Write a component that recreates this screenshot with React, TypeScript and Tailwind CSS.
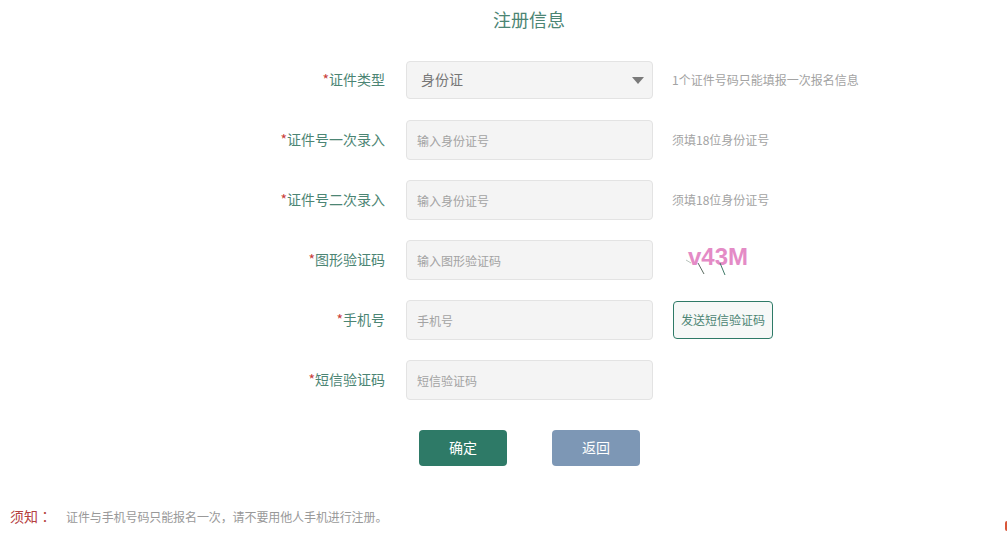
const FIELDS = [
  { label: '证件号一次录入', placeholder: '输入身份证号', hint: '须填18位身份证号' },
  { label: '证件号二次录入', placeholder: '输入身份证号', hint: '须填18位身份证号' },
];

function Row({ label, children, aside }: { label: string; children: React.ReactNode; aside?: React.ReactNode }) {
  return (
    <div className="flex h-[40px] items-center">
      <label className="w-[385px] pb-[2px] text-right text-[14px] text-[#4c8574]">
        <span className="text-[#c8403a]">*</span>
        {label}
      </label>
      <div className="ml-[21px] h-full w-[247px]">{children}</div>
      {aside && <div className="ml-[20px]">{aside}</div>}
    </div>
  );
}

function TextInput({ placeholder }: { placeholder: string }) {
  return (
    <input
      placeholder={placeholder}
      className="h-full w-full rounded-[4px] border border-[#e3e3e3] bg-[#f4f4f4] px-[10px] text-[12px] outline-none placeholder:text-[#a3a3a3]"
    />
  );
}

function Hint({ children }: { children: React.ReactNode }) {
  return <span className="-ml-[1px] block text-[12px] text-[#a3a3a3]">{children}</span>;
}

function Captcha() {
  return (
    <div className="relative -mt-[6px] h-[40px] w-[80px]">
      <span className="absolute left-[15px] top-[3px] text-[24px] leading-[34px] font-bold text-[#e48bc6] [font-family:'Liberation_Sans',sans-serif]">
        v43M
      </span>
      <svg className="absolute left-0 top-0" width="80" height="40" fill="none" strokeWidth="1">
        <path d="M13 23 L18 26" stroke="#b9c4bd" />
        <path d="M25 26 L31 37" stroke="#5a6b60" />
        <path d="M47 26 L52 38" stroke="#3f7a68" />
      </svg>
    </div>
  );
}

export default function App() {
  return (
    <div className="relative h-[539px] w-[1007px] overflow-hidden bg-white font-['Noto_Sans_CJK_SC',sans-serif]">
      <h1 className="ml-[493px] pt-[6px] text-[18px] leading-[26px] font-normal text-[#4c8574]">注册信息</h1>

      <div className="mt-[29px] flex flex-col gap-[20px]">
        <div className="flex h-[38px] items-center">
          <label className="w-[385px] pb-[2px] text-right text-[14px] text-[#4c8574]">
            <span className="text-[#c8403a]">*</span>证件类型
          </label>
          <div className="ml-[21px] flex h-full w-[247px] items-center justify-between rounded-[4px] border border-[#e3e3e3] bg-[#f4f4f4] pr-[8px] pl-[14px] text-[14px] text-[#777777]">
            <span className="pb-[2px]">身份证</span>
            <svg width="12" height="7" viewBox="0 0 12 7">
              <path d="M0 0H12L6 7Z" fill="#7a7a7a" />
            </svg>
          </div>
          <div className="ml-[20px]">
            <Hint>1个证件号码只能填报一次报名信息</Hint>
          </div>
        </div>

        <div className="mt-[1px] flex flex-col gap-[20px]">
          {FIELDS.map((f) => (
            <Row key={f.label} label={f.label} aside={<Hint>{f.hint}</Hint>}>
              <TextInput placeholder={f.placeholder} />
            </Row>
          ))}
          <Row label="图形验证码" aside={<Captcha />}>
            <TextInput placeholder="输入图形验证码" />
          </Row>
          <Row
            label="手机号"
            aside={
              <button className="h-[38px] w-[100px] rounded-[4px] border border-[#2e7a67] bg-[#f6f8f7] text-[12px] text-[#4c8574]">
                发送短信验证码
              </button>
            }
          >
            <TextInput placeholder="手机号" />
          </Row>
          <Row label="短信验证码">
            <TextInput placeholder="短信验证码" />
          </Row>
        </div>
      </div>

      <div className="mt-[30px] ml-[419px] flex gap-[45px]">
        <button className="h-[36px] w-[88px] rounded-[4px] bg-[#2e7a67] pb-[2px] text-[14px] text-white">确定</button>
        <button className="h-[36px] w-[88px] rounded-[4px] bg-[#7d97b5] pb-[2px] text-[14px] text-white">返回</button>
      </div>

      <div className="mt-[40px] ml-[10px] flex items-center">
        <span className="w-[56px] pb-[2px] text-[14px] text-[#b5403f]">
          须知<span className="font-['Noto_Sans_CJK_TC',sans-serif]">：</span>
        </span>
        <span className="pb-[2px] text-[12px] tracking-[-0.1px] text-[#999999]">
          证件与手机号码只能报名一次，请不要用他人手机进行注册。
        </span>
      </div>

      <div className="absolute top-[521px] left-[1005px] h-[10px] w-[4px] rounded-full bg-[#d9573a]" />
    </div>
  );
}
